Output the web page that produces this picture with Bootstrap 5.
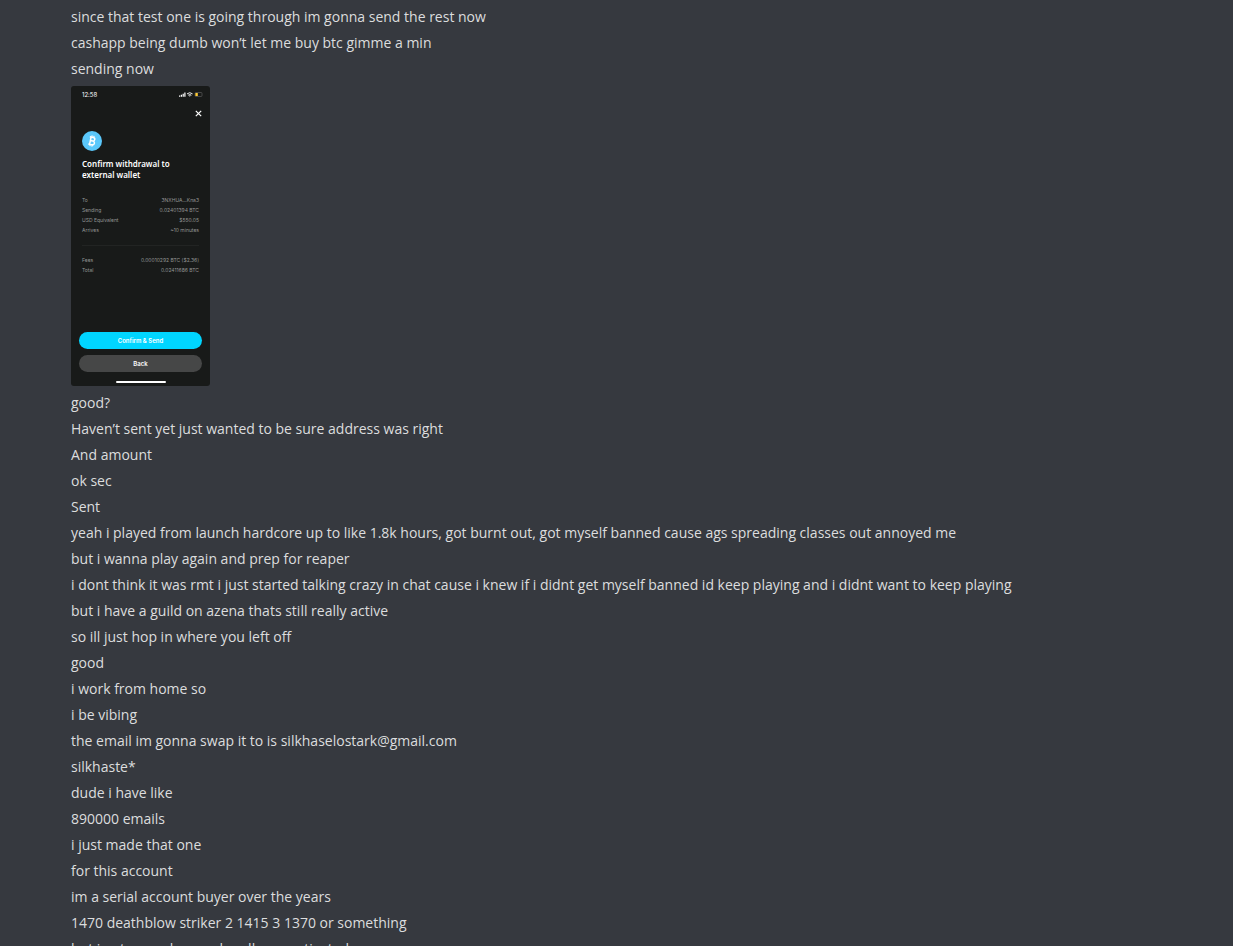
<!DOCTYPE html>
<html lang="en">
<head>
<meta charset="utf-8">
<meta name="viewport" content="width=device-width, initial-scale=1">
<title>Chat</title>
<link href="https://cdn.jsdelivr.net/npm/bootstrap@5.3.0/dist/css/bootstrap.min.css" rel="stylesheet">
<style>
  body { background: #36393f; color: #dcddde; font-family: "Open Sans", "Noto Sans", sans-serif; }
  .chat { padding: 4px 48px 0 71px; scrollbar-width: none; }
  .chat::-webkit-scrollbar { display: none; }
  .msg { font-size: 14px; line-height: 22px; padding: 2px 0; }
  .shot { width: 139px; height: 300px; margin: 4px 0; border-radius: 3px; background: #181a19; color: #fff; font-family: Inter, sans-serif; }
  .status { padding: 5px 7px 0 11px; font-size: 6px; line-height: 7px; }
  .close-row { padding: 12px 8px 0 0; height: 33px; line-height: 1; }
  .shot-body { padding: 0 11px; }
  .shot h2 { font-family: "Noto Sans", sans-serif; font-size: 8px; line-height: 11px; font-weight: 600; margin: 7px 0 15px; }
  .facts { font-size: 5px; line-height: 10px; color: #939594; }
  .facts dt { font-weight: 400; }
  .facts dd { margin: 0; }
  .facts + .facts { border-top: 1px solid #222423; margin-top: 10px; padding-top: 9px; }
  .actions { padding: 0 8px; gap: 6px; }
  .actions button { border: 0; border-radius: 9px; height: 17px; font-size: 6px; line-height: 17px; font-weight: 600; color: #fff; background: #464747; padding: 0; }
  .actions .confirm { background: #00d5ff; }
  .home-bar { width: 50px; height: 2px; border-radius: 1px; background: #fff; margin: 9px auto 3px; }
</style>
</head>
<body>
<main class="chat vh-100 overflow-auto">
  <div class="msg">since that test one is going through im gonna send the rest now</div>
  <div class="msg">cashapp being dumb won’t let me buy btc gimme a min</div>
  <div class="msg">sending now</div>
  <section class="shot d-flex flex-column">
    <div class="status d-flex justify-content-between">
      <span>12:58</span>
      <svg width="25" height="7" viewBox="0 0 25 7" aria-hidden="true"><path d="M1 4.500h1.200v1.200H1zM2.800 3.800H4v1.900H2.800zM4.600 2.800h1.200v2.900H4.600zM6.300 1.500h1.200v4.200H6.300z" fill="#fff"/><path d="M9 2.900q2.800-2.400 5.600 0M10.200 4.200q1.600-1.300 3.200 0" fill="none" stroke="#fff" stroke-width=".9"/><path d="M10.800 4.600h2l-1 1.200z" fill="#fff"/><rect x="17" y="1.500" width="7" height="4" rx="1" fill="none" stroke="#666" stroke-width=".6"/><path d="M17.400 2h2.400v3h-2.400z" fill="#fc3"/></svg>
    </div>
    <div class="close-row"><svg class="d-block ms-auto" width="7" height="7" viewBox="0 0 7 7" aria-label="Close"><path d="M.8.800l5.400 5.400M6.200.800L.8 6.200" stroke="#fff" stroke-width="1.200"/></svg></div>
    <div class="shot-body">
      <svg class="d-block" width="20" height="20" viewBox="0 0 20 20" aria-label="Bitcoin"><circle cx="10" cy="10" r="10" fill="#5bc8fb"/><g transform="rotate(12 10 10)" fill="none" stroke="#fff" stroke-width="1.500"><path d="M7 6.300h3.600a1.800 1.800 0 0 1 0 3.600H8.200h2.700a1.900 1.900 0 0 1 0 3.800H7M8.300 6v8"/><path d="M9 4.500v1.600M11 4.500v1.800M9 13.800v1.700M11 13.700v1.800" stroke-width="1.100"/></g></svg>
      <h2>Confirm withdrawal to<br>external wallet</h2>
      <dl class="facts mb-0">
        <div class="d-flex justify-content-between"><dt>To</dt><dd>3NXHUA...Kna3</dd></div>
        <div class="d-flex justify-content-between"><dt>Sending</dt><dd>0.02401394 BTC</dd></div>
        <div class="d-flex justify-content-between"><dt>USD Equivalent</dt><dd>$550.05</dd></div>
        <div class="d-flex justify-content-between"><dt>Arrives</dt><dd>~10 minutes</dd></div>
      </dl>
      <dl class="facts mb-0">
        <div class="d-flex justify-content-between"><dt>Fees</dt><dd>0.00010292 BTC ($2.36)</dd></div>
        <div class="d-flex justify-content-between"><dt>Total</dt><dd>0.02411686 BTC</dd></div>
      </dl>
    </div>
    <div class="actions d-flex flex-column mt-auto">
      <button type="button" class="confirm">Confirm &amp; Send</button>
      <button type="button">Back</button>
    </div>
    <div class="home-bar"></div>
  </section>
  <div class="msg">good?</div>
  <div class="msg">Haven’t sent yet just wanted to be sure address was right</div>
  <div class="msg">And amount</div>
  <div class="msg">ok sec</div>
  <div class="msg">Sent</div>
  <div class="msg">yeah i played from launch hardcore up to like 1.8k hours, got burnt out, got myself banned cause ags spreading classes out annoyed me</div>
  <div class="msg">but i wanna play again and prep for reaper</div>
  <div class="msg">i dont think it was rmt i just started talking crazy in chat cause i knew if i didnt get myself banned id keep playing and i didnt want to keep playing</div>
  <div class="msg">but i have a guild on azena thats still really active</div>
  <div class="msg">so ill just hop in where you left off</div>
  <div class="msg">good</div>
  <div class="msg">i work from home so</div>
  <div class="msg">i be vibing</div>
  <div class="msg">the email im gonna swap it to is silkhaselostark@gmail.com</div>
  <div class="msg">silkhaste*</div>
  <div class="msg">dude i have like</div>
  <div class="msg">890000 emails</div>
  <div class="msg">i just made that one</div>
  <div class="msg">for this account</div>
  <div class="msg">im a serial account buyer over the years</div>
  <div class="msg">1470 deathblow striker 2 1415 3 1370 or something</div>
  <div class="msg">but i got super lazy and really unmotivated</div>
</main>
<script src="https://cdn.jsdelivr.net/npm/bootstrap@5.3.0/dist/js/bootstrap.bundle.min.js"></script>
</body>
</html>
